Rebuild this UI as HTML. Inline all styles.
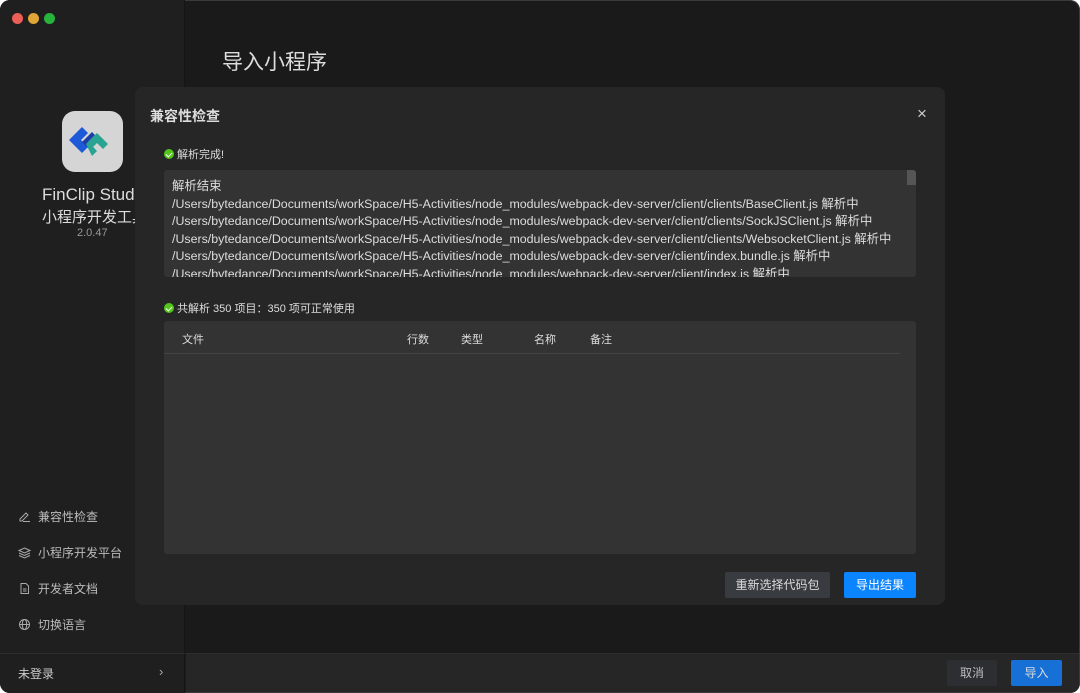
<!DOCTYPE html>
<html><head><meta charset="utf-8"><style>
*{margin:0;padding:0;box-sizing:border-box}
body{width:1080px;height:693px;background:#fff;font-family:"Liberation Sans","Noto Sans CJK SC",sans-serif;overflow:hidden;position:relative}
.win{position:absolute;left:0;top:0;width:1080px;height:693px;background:#1a1a1a;border-radius:10px;overflow:hidden;box-shadow:inset 0 0 0 1px #3a3a3a}
.side{position:absolute;left:0;top:0;width:185px;height:693px;background:#1f1f1f;border-right:1px solid #151515}
.dot{position:absolute;top:13px;width:11px;height:11px;border-radius:50%}
.t{position:absolute;white-space:nowrap}
.modal{position:absolute;left:135px;top:87px;width:810px;height:518px;background:#262626;border-radius:8px}
.box{position:absolute;background:#333;border-radius:3px}
.ok{display:inline-block;width:10px;height:10px;border-radius:50%;background:#52c41a;vertical-align:-1px;margin-right:3px;position:relative}
.ok:after{content:"";position:absolute;left:3px;top:2px;width:3px;height:5px;border:solid #fff;border-width:0 1.3px 1.3px 0;transform:rotate(45deg)}
.log div{font-size:12.4px;color:#ddd;line-height:17.6px}
.btn{position:absolute;font-size:12px;text-align:center;border-radius:2px}
.nav{position:absolute;left:18px;font-size:12px;color:#bbb}
.nav svg{vertical-align:-2px;margin-right:7px}
</style></head><body>
<div class="win">
<div class="side">
<div class="dot" style="left:12px;background:#ec5f57"></div>
<div class="dot" style="left:28px;background:#dea636"></div>
<div class="dot" style="left:44px;background:#28b33c"></div>
<div style="position:absolute;left:62px;top:111px;width:61px;height:61px;border-radius:13px;background:#d5d5d5"></div>
<svg style="position:absolute;left:67px;top:120px" width="50" height="44" viewBox="0 0 50 44">
<path d="M2 20 L15 7 L21 13 L14 20 L21 27 L15 33 Z" fill="#1e5ad8"/>
<path d="M15 22 L25 12 L28 15 L21 22 L28 29 L25 32 Z" fill="#1a3fa8"/>
<path d="M19 24 L30 13 L41 24 L36 29 L30 23 L26 27 L30 31 L25 36 Z" fill="#2aa492"/>
</svg>
<div class="t" style="left:42px;top:185px;font-size:17px;color:#ddd">FinClip Studi</div>
<div class="t" style="left:42px;top:206px;font-size:15px;color:#ddd">小程序开发工具</div>
<div class="t" style="left:77px;top:227px;font-size:11px;color:#999">2.0.47</div>
<div class="nav" style="top:508px"><svg width="13" height="13" viewBox="0 0 13 13" fill="none" stroke="#aaa" stroke-width="1"><path d="M2 11 L2 9 L8 3 L10 5 L4 11 Z M5 11.5 H12"/></svg>兼容性检查</div>
<div class="nav" style="top:544px"><svg width="13" height="13" viewBox="0 0 13 13" fill="none" stroke="#aaa" stroke-width="1"><path d="M6.5 2 L12 4.5 L6.5 7 L1 4.5 Z M1 7 L6.5 9.5 L12 7 M1 9.5 L6.5 12 L12 9.5"/></svg>小程序开发平台</div>
<div class="nav" style="top:580px"><svg width="13" height="13" viewBox="0 0 13 13" fill="none" stroke="#aaa" stroke-width="1"><path d="M3 1.5 H8 L10.5 4 V11.5 H3 Z M5 7 H8.5 M5 9 H8.5"/></svg>开发者文档</div>
<div class="nav" style="top:616px"><svg width="13" height="13" viewBox="0 0 13 13" fill="none" stroke="#aaa" stroke-width="1"><circle cx="6.5" cy="6.5" r="5"/><ellipse cx="6.5" cy="6.5" rx="2.2" ry="5"/><path d="M1.5 6.5 H11.5"/></svg>切换语言</div>
<div style="position:absolute;left:0;top:653px;width:185px;border-top:1px solid #2e2e2e"></div>
<div class="t" style="left:18px;top:665px;font-size:12px;color:#ccc">未登录</div>
<div class="t" style="left:159px;top:664px;font-size:13px;color:#aaa">›</div>
</div>
<div class="t" style="left:222px;top:46px;font-size:21px;color:#ddd">导入小程序</div>
<div style="position:absolute;left:186px;top:653px;width:893px;height:39px;background:#262626;border-top:1px solid #2e2e2e"></div>
<div class="btn" style="left:947px;top:660px;width:50px;height:26px;line-height:26px;background:#2c2e31;color:#bbb">取消</div>
<div class="btn" style="left:1011px;top:660px;width:51px;height:26px;line-height:26px;background:#1670d6;color:#ddd">导入</div>
<div class="modal">
<div class="t" style="left:15px;top:19px;font-size:14px;font-weight:bold;color:#ddd">兼容性检查</div>
<div class="t" style="left:782px;top:17px;font-size:17px;color:#ccc">×</div>
<div class="t" style="left:29px;top:59px;font-size:11px;color:#ddd"><span class="ok"></span>解析完成!</div>
<div class="box log" style="left:29px;top:83px;width:752px;height:107px;overflow:hidden;padding:8px 8px 0">
<div>解析结束</div>
<div>/Users/bytedance/Documents/workSpace/H5-Activities/node_modules/webpack-dev-server/client/clients/BaseClient.js 解析中</div>
<div>/Users/bytedance/Documents/workSpace/H5-Activities/node_modules/webpack-dev-server/client/clients/SockJSClient.js 解析中</div>
<div>/Users/bytedance/Documents/workSpace/H5-Activities/node_modules/webpack-dev-server/client/clients/WebsocketClient.js 解析中</div>
<div>/Users/bytedance/Documents/workSpace/H5-Activities/node_modules/webpack-dev-server/client/index.bundle.js 解析中</div>
<div>/Users/bytedance/Documents/workSpace/H5-Activities/node_modules/webpack-dev-server/client/index.js 解析中</div>
<div style="position:absolute;right:0;top:0;width:9px;height:15px;background:#555"></div>
</div>
<div class="t" style="left:29px;top:213px;font-size:11px;color:#ddd"><span class="ok"></span>共解析 350 项目：350 项可正常使用</div>
<div class="box" style="left:29px;top:234px;width:752px;height:233px">
<div style="position:absolute;left:0;top:0;width:736px;height:33px;border-bottom:1px solid #444;font-size:11px;color:#ddd">
<span class="t" style="left:18px;top:10px">文件</span><span class="t" style="left:243px;top:10px">行数</span><span class="t" style="left:297px;top:10px">类型</span><span class="t" style="left:370px;top:10px">名称</span><span class="t" style="left:426px;top:10px">备注</span>
</div></div>
<div class="btn" style="left:590px;top:485px;width:105px;height:26px;line-height:26px;background:#383b40;color:#ddd">重新选择代码包</div>
<div class="btn" style="left:709px;top:485px;width:72px;height:26px;line-height:26px;background:#0a84ff;color:#fff">导出结果</div>
</div>
</div>
</body></html>
